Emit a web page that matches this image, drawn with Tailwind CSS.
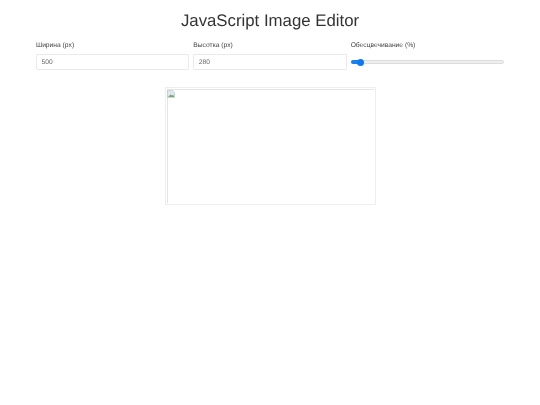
<!DOCTYPE html>
<html lang="ru">
<head>
    <meta charset="UTF-8">
    <meta name="viewport" content="width=device-width, initial-scale=1.0">
    <title>JavaScript Image Editor</title>
    <script src="https://cdn.jsdelivr.net/npm/@tailwindcss/browser@4"></script>
</head>
<body class="bg-white font-['Liberation_Sans',Arial,sans-serif] text-[#333] [text-rendering:geometricPrecision]">
    <div class="w-[468px] mx-auto pt-[10px] will-change-transform">
        <h1 class="text-[16.8px] leading-[22px] font-normal text-center mb-[9px]">JavaScript Image Editor</h1>
        <div class="grid grid-cols-3 gap-x-[4px]">
            <div>
                <label class="block text-[6.7px] leading-[10px] text-[#444] mb-[3px]">Ширина (px)</label>
                <div class="h-[16px] border border-[#e8eaec] rounded-[1px] px-[4.5px] text-[6.7px] leading-[15px] text-[#666]">500</div>
            </div>
            <div>
                <label class="block text-[6.7px] leading-[10px] text-[#444] mb-[3px]">Высотка (px)</label>
                <div class="h-[16px] border border-[#e8eaec] rounded-[1px] px-[4.5px] text-[6.7px] leading-[15px] text-[#666]">280</div>
            </div>
            <div>
                <label class="block text-[6.7px] leading-[10px] text-[#444] mb-[3px]">Обесцвечивание (%)</label>
                <div class="h-[16px] flex items-center">
                    <div class="relative w-full h-[4px] rounded-full bg-[#efefef] border border-[#dcdcdc]">
                        <div class="absolute left-[-1px] top-[-1px] h-[4px] w-[9px] rounded-l-full bg-[#1a7fef]"></div>
                        <div class="absolute left-[5px] top-[-2.5px] w-[7px] h-[7px] rounded-full bg-[#0d78f2]"></div>
                    </div>
                </div>
            </div>
        </div>
        <div class="w-[211px] h-[118px] mx-auto mt-[17px] border border-[#eeeeee] p-[1px]">
            <div class="w-full h-full border-l border-t border-[#e4e4e4]">
                <svg class="-ml-px" width="8" height="8" viewBox="0 0 8 8">
                    <path d="M0.5 0.5H5.5L7.5 2.5V7.5H0.5Z" fill="#dfe8f2" stroke="#b4bec9" stroke-width="0.6"/>
                    <path d="M1 7L3.5 4.5L5 5.5L6 4.8L7 6V7Z" fill="#6db066"/>
                </svg>
            </div>
        </div>
    </div>
</body>
</html>
